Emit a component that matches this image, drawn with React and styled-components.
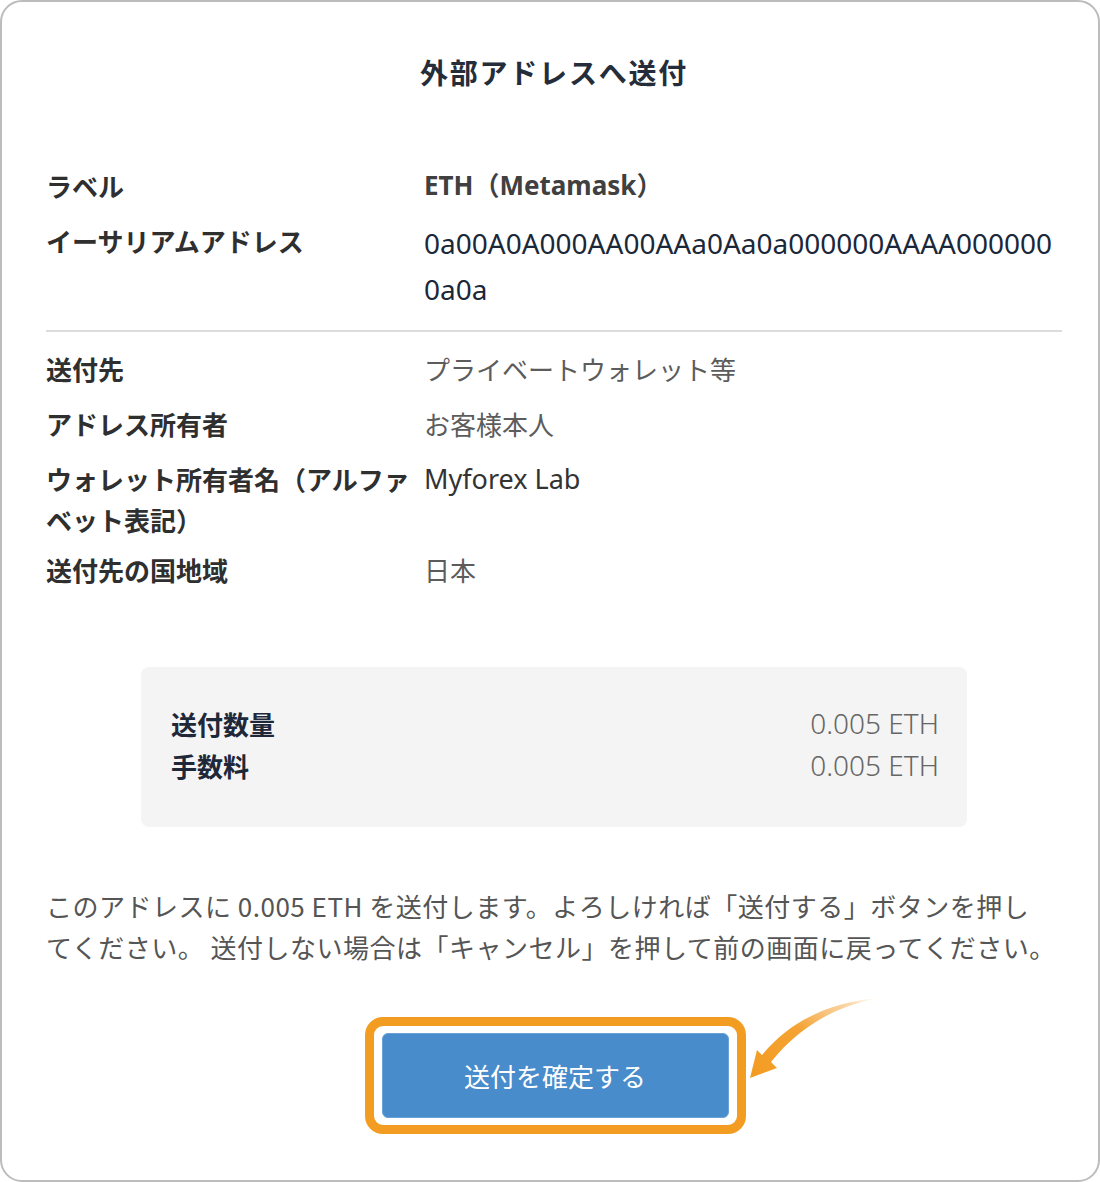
import React from 'react';
import styled, { createGlobalStyle } from 'styled-components';

const GlobalStyle = createGlobalStyle`
  html, body {
    margin: 0;
    padding: 0;
    background: #ffffff;
  }
  body {
    font-family: "Noto Sans", "Noto Sans CJK JP", sans-serif;
  }
`;

const Frame = styled.div`
  width: 1100px;
  height: 1182px;
  box-sizing: border-box;
  border: 2px solid #bcbcbc;
  border-radius: 22px;
  padding: 50px 36px 0 44px;
  background: #ffffff;
`;

const Title = styled.h1`
  margin: 0;
  font-family: "Noto Sans CJK JP", sans-serif;
  font-size: 28px;
  font-weight: 700;
  line-height: 40px;
  letter-spacing: 1.8px;
  text-align: center;
  color: #252d3a;
`;

const InfoList = styled.div`
  display: grid;
  grid-template-columns: 378px 1fr;
  row-gap: 9px;
  margin-top: ${(p) => p.$top}px;
`;

const Label = styled.div`
  min-height: 46px;
  font-family: "Noto Sans CJK JP", sans-serif;
  font-size: 26px;
  font-weight: 700;
  line-height: 41px;
  color: #2f2f2f;
`;

const valueStyles = {
  strong: `
    font-family: "Noto Sans", "Noto Sans CJK JP", sans-serif;
    font-weight: 700;
    font-size: 26px;
    line-height: 41px;
    color: #404040;
  `,
  address: `
    font-family: "Noto Sans", sans-serif;
    font-weight: 400;
    font-size: 28px;
    line-height: 46px;
    color: #1b2839;
    word-break: break-all;
  `,
  light: `
    font-family: "Noto Sans CJK JP", sans-serif;
    font-weight: 400;
    font-size: 26px;
    line-height: 41px;
    color: #5c5c5c;
  `,
  plain: `
    font-family: "Noto Sans", "Noto Sans CJK JP", sans-serif;
    font-weight: 400;
    font-size: 27px;
    line-height: 41px;
    color: #333333;
  `,
};

const Value = styled.div`
  min-height: 46px;
  ${(p) => valueStyles[p.$variant || 'light']}
`;

const Divider = styled.hr`
  margin: 18px 0 0;
  border: 0;
  height: 2px;
  background: #dcdcdc;
`;

const Summary = styled.div`
  width: 826px;
  box-sizing: border-box;
  margin: 72px auto 0;
  padding: 35px 28px 41px 30px;
  background: #f4f4f4;
  border-radius: 8px;
`;

const SummaryRow = styled.div`
  display: flex;
  justify-content: space-between;
  align-items: center;
  height: 42px;
`;

const SummaryLabel = styled.span`
  font-family: "Noto Sans CJK JP", sans-serif;
  font-size: 26px;
  font-weight: 700;
  color: #1e2838;
`;

const SummaryValue = styled.span`
  font-family: "Noto Sans", sans-serif;
  font-size: 28px;
  font-weight: 300;
  color: #666666;
`;

const Notice = styled.p`
  margin: 58px 0 0;
  font-family: "Noto Sans CJK JP", sans-serif;
  font-size: 26px;
  font-weight: 400;
  line-height: 41px;
  letter-spacing: 0.5px;
  color: #555555;
`;

const ButtonRow = styled.div`
  display: flex;
  justify-content: center;
  margin-top: 50px;
  padding-left: 2px;
`;

const Highlight = styled.div`
  position: relative;
  padding: 7px 8px;
  border: 9px solid #f39c22;
  border-radius: 18px;
`;

const ConfirmButton = styled.button`
  display: block;
  width: 347px;
  height: 85px;
  border: 1px solid #6aa2d8;
  border-radius: 6px;
  background: #488ccb;
  color: #ffffff;
  font-family: "Noto Sans CJK JP", sans-serif;
  font-size: 26px;
  font-weight: 400;
  cursor: pointer;
`;

const Arrow = styled.svg`
  position: absolute;
  left: 100%;
  top: -28px;
  margin-left: -4px;
  overflow: visible;
`;

const CurvedArrow = () => (
  <Arrow width="150" height="85" viewBox="0 0 150 85">
    <defs>
      <linearGradient id="arrowFade" x1="0" y1="1" x2="1" y2="0">
        <stop offset="0" stopColor="#f39c22" />
        <stop offset="0.5" stopColor="#f4a232" />
        <stop offset="0.85" stopColor="#f7bd72" stopOpacity="0.6" />
        <stop offset="1" stopColor="#f9d3a0" stopOpacity="0" />
      </linearGradient>
    </defs>
    <path
      d="M146 0 C 103 8, 67 28, 38 64 L 44 70 L 17 80 L 24 52 L 29 57 C 59 21, 99 4, 146 0 Z"
      fill="url(#arrowFade)"
    />
  </Arrow>
);

const infoTop = [
  ['ラベル', 'ETH（Metamask）', 'strong'],
  ['イーサリアムアドレス', '0a00A0A000AA00AAa0Aa0a000000AAAA0000000a0a', 'address'],
];

const infoBottom = [
  ['送付先', 'プライベートウォレット等', 'light'],
  ['アドレス所有者', 'お客様本人', 'light'],
  ['ウォレット所有者名（アルファベット表記）', 'Myforex Lab', 'plain'],
  ['送付先の国地域', '日本', 'light'],
];

export default function App() {
  return (
    <>
      <GlobalStyle />
      <Frame>
        <Title>外部アドレスへ送付</Title>

        <InfoList $top={73}>
          {infoTop.map(([label, value, variant]) => (
            <React.Fragment key={label}>
              <Label>{label}</Label>
              <Value $variant={variant}>{value}</Value>
            </React.Fragment>
          ))}
        </InfoList>

        <Divider />

        <InfoList $top={16}>
          {infoBottom.map(([label, value, variant]) => (
            <React.Fragment key={label}>
              <Label>{label}</Label>
              <Value $variant={variant}>{value}</Value>
            </React.Fragment>
          ))}
        </InfoList>

        <Summary>
          <SummaryRow>
            <SummaryLabel>送付数量</SummaryLabel>
            <SummaryValue>0.005 ETH</SummaryValue>
          </SummaryRow>
          <SummaryRow>
            <SummaryLabel>手数料</SummaryLabel>
            <SummaryValue>0.005 ETH</SummaryValue>
          </SummaryRow>
        </Summary>

        <Notice>
          このアドレスに 0.005 ETH を送付します。よろしければ「送付する」ボタンを押し
          <br />
          てください。 送付しない場合は「キャンセル」を押して前の画面に戻ってください。
        </Notice>

        <ButtonRow>
          <Highlight>
            <ConfirmButton type="button">送付を確定する</ConfirmButton>
            <CurvedArrow />
          </Highlight>
        </ButtonRow>
      </Frame>
    </>
  );
}
